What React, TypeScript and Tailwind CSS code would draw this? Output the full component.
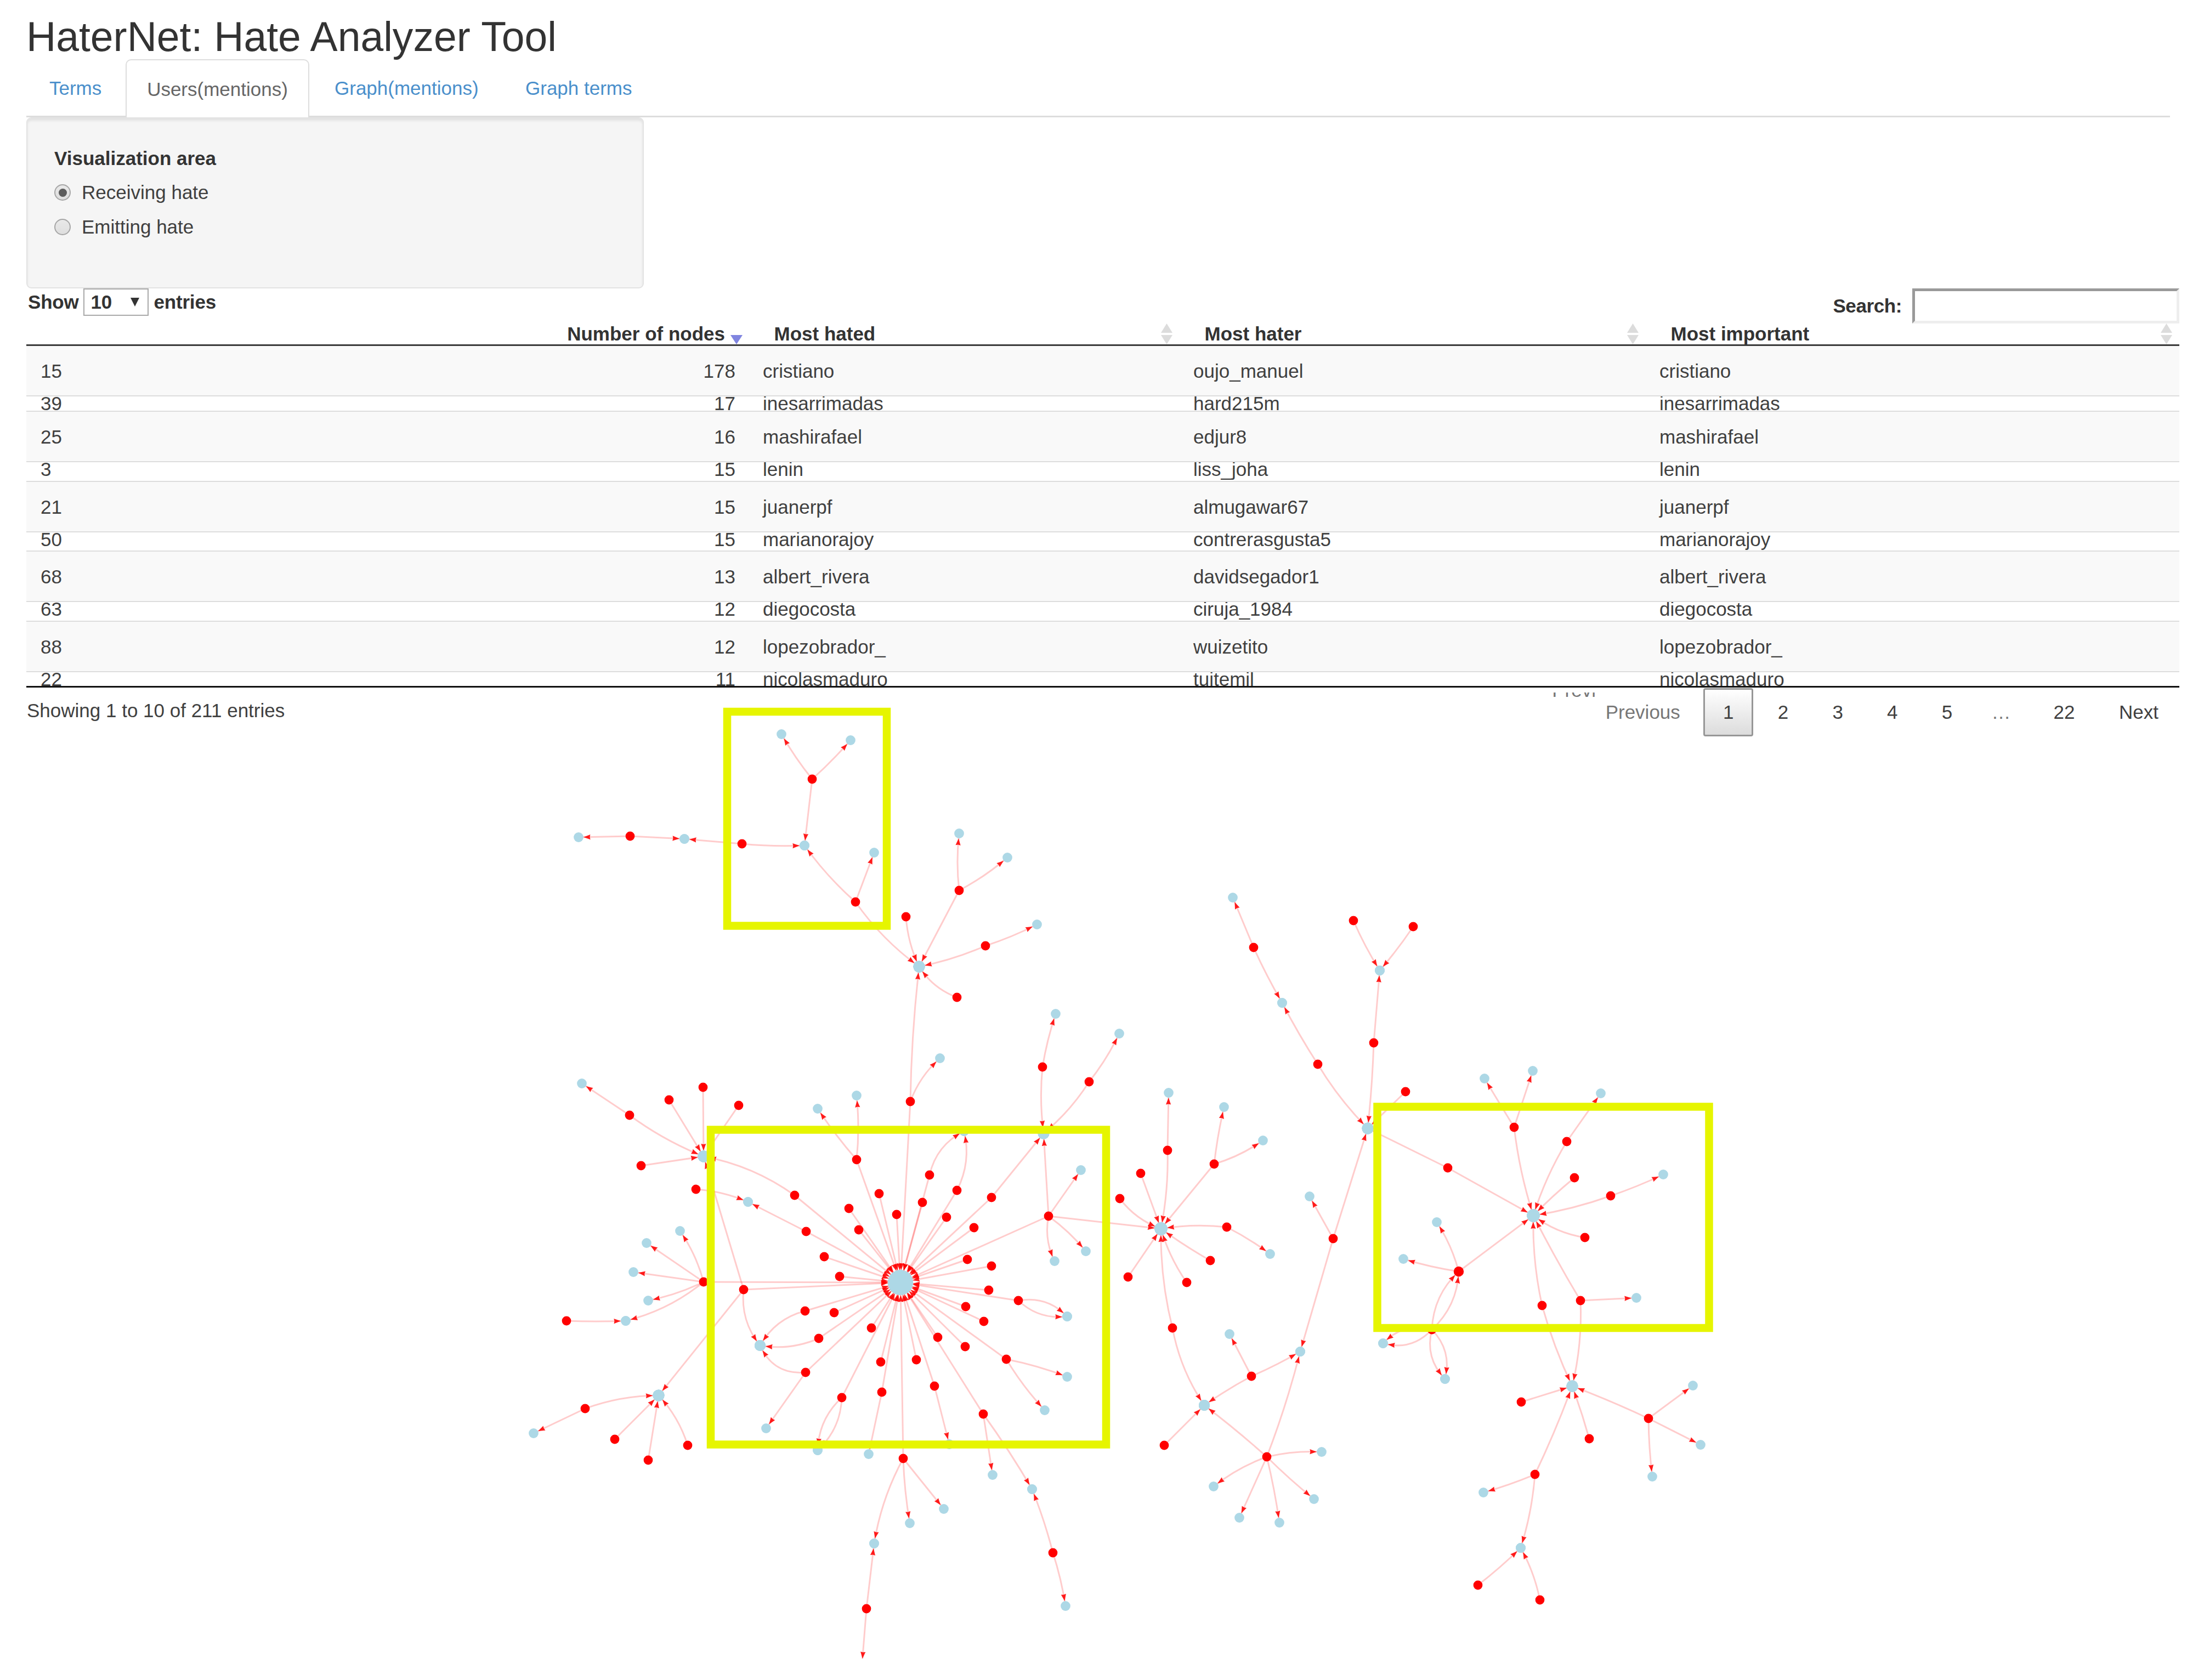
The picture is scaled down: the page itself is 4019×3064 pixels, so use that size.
import clsx from "clsx";

type Target = [x: number, y: number, bend?: number];
type Source = { at: [number, number]; to: Target[] };

const tabs = [
  { label: "Terms", width: "w-[181px]" },
  { label: "Users(mentions)", width: "w-[335px]", active: true },
  { label: "Graph(mentions)", width: "w-[348px]" },
  { label: "Graph terms", width: "w-[280px]" },
];

const rows = [
  { id: 15, nodes: 178, hated: "cristiano", hater: "oujo_manuel", height: "h-[90px]" },
  { id: 39, nodes: 17, hated: "inesarrimadas", hater: "hard215m", height: "h-[28px]" },
  { id: 25, nodes: 16, hated: "mashirafael", hater: "edjur8", height: "h-[92px]" },
  { id: 3, nodes: 15, hated: "lenin", hater: "liss_joha", height: "h-[36px]" },
  { id: 21, nodes: 15, hated: "juanerpf", hater: "almugawar67", height: "h-[92px]" },
  { id: 50, nodes: 15, hated: "marianorajoy", hater: "contrerasgusta5", height: "h-[35px]" },
  { id: 68, nodes: 13, hated: "albert_rivera", hater: "davidsegador1", height: "h-[92px]" },
  { id: 63, nodes: 12, hated: "diegocosta", hater: "ciruja_1984", height: "h-[36px]" },
  { id: 88, nodes: 12, hated: "lopezobrador_", hater: "wuizetito", height: "h-[92px]" },
  { id: 22, nodes: 11, hated: "nicolasmaduro", hater: "tuitemil", height: "h-[27px]" },
];

// Users that receive hate from several accounts
const CENTER: Target = [1642, 2339];
const T: Target = [1467, 1542];
const S: Target = [1676, 1763];
const M: Target = [1903, 2067];
const W: Target = [1283, 2109];
const D: Target = [1386, 2454];
const Q: Target = [1201, 2545];
const K: Target = [2117, 2241];
const Y: Target = [2196, 2563];
const Z: Target = [2371, 2465];
const O: Target = [2494, 2058];
const N: Target = [2516, 1770];
const G: Target = [2796, 2217];
const J: Target = [2867, 2528];
const X: Target = [2773, 2823];
const U: Target = [1594, 2815];
const V: Target = [1882, 2716];
const F: Target = [2660, 2319];

const radii = new Map<string, number>([
  ["1642,2339", 22.5],
  ["1676,1763", 10.5],
  ["1903,2067", 10.5],
  ["1283,2109", 10.5],
  ["1386,2454", 10],
  ["1201,2545", 10.5],
  ["2117,2241", 11.5],
  ["2196,2563", 10],
  ["2494,2058", 10.5],
  ["2796,2217", 11.5],
  ["2867,2528", 10.5],
]);

const bend = (t: Target, amount: number): Target => [t[0], t[1], amount];

const sources: Source[] = [
  { at: [1481, 1421], to: [[1425, 1339, -4], [1551, 1350, 3], T] },
  { at: [1149, 1525], to: [[1055, 1527], [1248, 1530]] },
  { at: [1353, 1539], to: [[1248, 1530], bend(T, 4)] },
  { at: [1560, 1645], to: [bend(T, -8), [1594, 1555], bend(S, 14)] },
  { at: [1652, 1672], to: [bend(S, 9)] },
  { at: [1749, 1624], to: [[1749, 1520, -6], [1837, 1564, 6], S] },
  { at: [1797, 1725], to: [[1891, 1686, 4], bend(S, -7)] },
  { at: [1745, 1819], to: [bend(S, -15)] },
  { at: [1660, 2009], to: [bend(S, -6), [1714, 1930, -12], CENTER] },
  { at: [1901, 1946], to: [[1925, 1849, -4], bend(M, 7)] },
  { at: [1986, 1973], to: [[2041, 1885, 6], bend(M, -10)] },
  { at: [1808, 2184], to: [M, CENTER] },
  { at: [1912, 2218], to: [M, [1971, 2134], [1980, 2282, -6], [1923, 2300, 14], CENTER, K] },
  { at: [1695, 2143], to: [[1758, 2063, -24], CENTER] },
  { at: [1745, 2171], to: [[1758, 2063, 20], CENTER] },
  { at: [1562, 2115], to: [[1491, 2022, -4], [1562, 1998, 6], CENTER] },
  { at: [1449, 2180], to: [bend(W, 20), CENTER] },
  { at: [1470, 2246], to: [[1364, 2192], CENTER] },
  { at: [1269, 2169], to: [[1364, 2192, -8]] },
  { at: [1548, 2204], to: [CENTER] },
  { at: [1603, 2177], to: [CENTER] },
  { at: [1566, 2243], to: [CENTER] },
  { at: [1635, 2215], to: [CENTER] },
  { at: [1682, 2193], to: [CENTER] },
  { at: [1726, 2220], to: [CENTER] },
  { at: [1776, 2239], to: [CENTER] },
  { at: [1503, 2292], to: [CENTER] },
  { at: [1531, 2328], to: [CENTER] },
  { at: [1764, 2297], to: [CENTER] },
  { at: [1808, 2309], to: [CENTER] },
  { at: [1803, 2353], to: [CENTER] },
  { at: [1761, 2383], to: [CENTER] },
  { at: [1794, 2410], to: [CENTER] },
  { at: [1710, 2439], to: [CENTER] },
  { at: [1760, 2456], to: [CENTER] },
  { at: [1671, 2480], to: [CENTER] },
  { at: [1589, 2422], to: [CENTER] },
  { at: [1521, 2394], to: [CENTER] },
  { at: [1606, 2484], to: [CENTER] },
  { at: [1857, 2372], to: [[1946, 2401, -25], [1946, 2401, 22], CENTER] },
  { at: [1835, 2479], to: [[1946, 2511, -5], [1905, 2572, 6], CENTER] },
  { at: [1793, 2579], to: [[1810, 2690], bend(V, -4), CENTER] },
  { at: [1704, 2528], to: [[1731, 2634], CENTER] },
  { at: [1468, 2391], to: [bend(D, 22), CENTER] },
  { at: [1493, 2441], to: [bend(D, -16), CENTER] },
  { at: [1469, 2503], to: [bend(D, -34), [1397, 2605], CENTER] },
  { at: [1356, 2352], to: [bend(D, 22), W, Q, CENTER] },
  { at: [1283, 2338], to: [[1240, 2245, 9], [1179, 2267], [1155, 2320], [1182, 2372, -7], [1141, 2409, -18], CENTER] },
  { at: [1033, 2409], to: [[1141, 2409, 2]] },
  { at: [1148, 2034], to: [[1061, 1976], bend(W, 10)] },
  { at: [1220, 2006], to: [W] },
  { at: [1282, 1983], to: [W] },
  { at: [1347, 2016], to: [W] },
  { at: [1169, 2126], to: [W] },
  { at: [1067, 2569], to: [[973, 2614], bend(Q, -12)] },
  { at: [1121, 2625], to: [Q] },
  { at: [1182, 2663], to: [Q] },
  { at: [1254, 2636], to: [bend(Q, 12)] },
  { at: [1535, 2549], to: [[1491, 2645, 22], [1491, 2645, -22], CENTER] },
  { at: [1608, 2539], to: [[1584, 2652], CENTER] },
  { at: [1647, 2660], to: [[1659, 2778, 4], [1721, 2752], bend(U, 14), CENTER] },
  { at: [1580, 2934], to: [U, [1572, 3034]] },
  { at: [1920, 2832], to: [bend(V, 4), [1943, 2929, -4]] },
  { at: [2042, 2186], to: [bend(K, 14)] },
  { at: [2080, 2140], to: [K] },
  { at: [2129, 2098], to: [bend(K, -8), [2131, 1993]] },
  { at: [2214, 2123], to: [[2232, 2019, -3], [2303, 2080, 8], K] },
  { at: [2237, 2238], to: [[2316, 2287, -4], bend(K, 8)] },
  { at: [2207, 2299], to: [bend(K, -3)] },
  { at: [2164, 2339], to: [bend(K, -9)] },
  { at: [2057, 2329], to: [K] },
  { at: [2138, 2422], to: [bend(K, -12), bend(Y, 16)] },
  { at: [2282, 2510], to: [[2242, 2433], bend(Z, 3), bend(Y, 3)] },
  { at: [2123, 2636], to: [Y] },
  {
    at: [2310, 2657],
    to: [bend(Y, 3), bend(Z, 6), [2410, 2648, -7], [2396, 2734, 3], [2333, 2777, -3], [2260, 2768], [2213, 2711, 9]],
  },
  { at: [2431, 2259], to: [[2388, 2182], Z, O] },
  { at: [2403, 1941], to: [[2338, 1829, -3], bend(O, 9)] },
  { at: [2286, 1728], to: [[2248, 1637], [2338, 1829, 3]] },
  { at: [2468, 1679], to: [bend(N, 4)] },
  { at: [2577, 1690], to: [bend(N, -3)] },
  { at: [2505, 1902], to: [N, bend(O, -3)] },
  { at: [2563, 1991], to: [O] },
  { at: [2640, 2130], to: [O, G] },
  { at: [2761, 2056], to: [[2707, 1967], [2795, 1953], bend(G, 8)] },
  { at: [2857, 2082], to: [[2919, 1994], bend(G, 9)] },
  { at: [2871, 2148], to: [bend(G, 3)] },
  { at: [2937, 2181], to: [[3033, 2142, 3], bend(G, -7)] },
  { at: [2890, 2257], to: [bend(G, -13)] },
  { at: [2660, 2319], to: [[2620, 2229, 8], [2559, 2296, -4], G] },
  { at: [2812, 2381], to: [bend(G, -10), bend(J, 7)] },
  { at: [2882, 2372], to: [bend(G, -3), [2984, 2367], bend(J, -11)] },
  {
    at: [2611, 2425],
    to: [[2522, 2450, 28], [2522, 2450, -28], [2635, 2515, 26], [2635, 2515, -26], bend(F, -24), bend(F, 24)],
  },
  { at: [2774, 2557], to: [J] },
  { at: [3006, 2587], to: [bend(J, 3), [3087, 2527], [3101, 2635], [3013, 2693, 3]] },
  { at: [2898, 2624], to: [bend(J, 2)] },
  { at: [2799, 2689], to: [bend(J, 4), [2705, 2722, -3], bend(X, -8)] },
  { at: [2695, 2891], to: [bend(X, 3)] },
  { at: [2808, 2918], to: [bend(X, 8)] },
];

function Edge({ from, to }: { from: [number, number]; to: Target }) {
  const [x1, y1] = from;
  const [x2, y2, amount = 0] = to;
  const length = Math.hypot(x2 - x1, y2 - y1);
  const cx = (x1 + x2) / 2 - ((y2 - y1) / length) * amount;
  const cy = (y1 + y2) / 2 + ((x2 - x1) / length) * amount;

  // Walk back along the curve until the tip touches the node's border
  const radius = radii.get(`${x2},${y2}`) ?? 9;
  let t = 1;
  let tipX = x2;
  let tipY = y2;
  while (t > 0.4 && Math.hypot(tipX - x2, tipY - y2) < radius) {
    t -= 0.002;
    tipX = (1 - t) ** 2 * x1 + 2 * t * (1 - t) * cx + t * t * x2;
    tipY = (1 - t) ** 2 * y1 + 2 * t * (1 - t) * cy + t * t * y2;
  }
  const back = Math.max(t - 14 / length, 0);
  const backX = (1 - back) ** 2 * x1 + 2 * back * (1 - back) * cx + back * back * x2;
  const backY = (1 - back) ** 2 * y1 + 2 * back * (1 - back) * cy + back * back * y2;
  const angle = (Math.atan2(tipY - backY, tipX - backX) * 180) / Math.PI;

  return (
    <g>
      <path d={`M${x1} ${y1}Q${cx} ${cy} ${x2} ${y2}`} fill="none" stroke="#ff0000" strokeOpacity="0.2" strokeWidth="3" />
      <path
        d="M0 0L-12.5 4.6L-11.5 0L-12.5 -4.6Z"
        fill="#ff0000"
        fillOpacity="0.88"
        transform={`translate(${tipX} ${tipY}) rotate(${angle})`}
      />
    </g>
  );
}

function HateGraph() {
  return (
    <svg className="-mt-[63px] block h-[1745px] w-[4019px]" viewBox="0 1280 4019 1745">
      {sources.map(({ at, to }) => to.map((target, i) => <Edge key={`${at}-${i}`} from={at} to={target} />))}
      {sources.map(({ to }) =>
        to
          .filter((target) => !(target[0] === F[0] && target[1] === F[1]))
          .map(([x, y], i) => (
            <circle key={`${x}-${y}-${i}`} cx={x} cy={y} r={radii.get(`${x},${y}`) ?? 8.9} fill="#add8e6" />
          ))
      )}
      {sources.map(({ at: [x, y] }) => (
        <circle key={`${x}-${y}`} cx={x} cy={y} r={x === F[0] && y === F[1] ? 9.2 : 8.4} fill="#ff0000" />
      ))}
      <g fill="none" stroke="#e6f500" strokeWidth="14.5">
        <rect x="1326" y="1298" width="291" height="390.5" />
        <rect x="1296" y="2060.5" width="721" height="574" />
        <rect x="2511.5" y="2018.5" width="605" height="403.5" />
      </g>
    </svg>
  );
}

function SortIcon() {
  return (
    <svg className="h-[38px] w-[21px]" viewBox="0 0 21 38" fill="#dcdcdc">
      <path d="M10.5 0L21 17H0ZM10.5 38L21 21H0Z" />
    </svg>
  );
}

function Radio({ label, checked }: { label: string; checked?: boolean }) {
  return (
    <div className="flex h-[62.5px] items-center">
      <span className="flex size-[30px] items-center justify-center rounded-full border-2 border-[#a6a6a6] bg-linear-to-b from-[#e9e9e9] to-[#dedede]">
        {checked && <span className="size-[15px] rounded-full bg-[#5c5c5c]" />}
      </span>
      <span className="ml-[20px]">{label}</span>
    </div>
  );
}

function Pagination() {
  return (
    <div className="mr-[2px] flex h-[88px] items-stretch leading-[38px] text-[#404040]">
      <span className="flex w-[216px] items-center justify-center pr-[5px] text-[#777]">Previous</span>
      <span className="flex w-[91px] items-center justify-center rounded-[4px] border-[3px] border-[#979797] bg-linear-to-b from-white to-[#dcdcdc]">
        1
      </span>
      {[2, 3, 4, 5].map((page) => (
        <span key={page} className="ml-[8.7px] flex w-[91px] items-center justify-center">
          {page}
        </span>
      ))}
      <span className="flex w-[106px] items-center justify-center text-[#777]">…</span>
      <span className="ml-[7px] flex w-[110px] items-center justify-center">22</span>
      <span className="ml-[9px] flex w-[144px] items-center justify-center">Next</span>
    </div>
  );
}

export default function App() {
  return (
    <div className="h-[3064px] w-[4019px] overflow-hidden bg-white font-['Liberation_Sans',Arial,sans-serif] text-[35px] leading-[40px] text-[#404040]">
      <h1 className="h-[108px] pt-[25px] pl-[48px] text-[75.1px] leading-[84px] whitespace-nowrap text-[#333]">
        HaterNet: Hate Analyzer Tool
      </h1>

      <nav className="ml-[48px] flex h-[106px] w-[3909px] border-b-[3px] border-[#ddd]">
        {tabs.map((tab) => (
          <a
            key={tab.label}
            className={clsx(
              "flex shrink-0 pt-[33px]",
              tab.width,
              tab.active
                ? "z-10 h-[106px] justify-center rounded-t-[10px] border-[2.5px] border-b-0 border-[#ddd] bg-white pt-[30px] text-[#666]"
                : "text-[#4a8fcb]",
              !tab.active && (tab.label === "Terms" ? "pl-[42px]" : "pl-[46px]")
            )}
          >
            {tab.label}
          </a>
        ))}
      </nav>

      <section className="ml-[48px] h-[312px] w-[1126px] rounded-[9px] border-[2.5px] border-[#e3e3e3] bg-[#f5f5f5] pt-[53px] pl-[49px] shadow-[inset_0_4px_4px_rgba(0,0,0,0.08)]">
        <p className="mb-[11px] font-bold text-[#333]">Visualization area</p>
        <Radio label="Receiving hate" checked />
        <Radio label="Emitting hate" />
      </section>

      <div className="mr-[45px] ml-[51px] flex h-[64px] items-start justify-between font-bold text-[#333]">
        <div className="flex items-center tracking-[-0.2px]">
          Show
          <span className="mr-[10px] ml-[8px] flex h-[50px] w-[119px] items-center justify-between border-2 border-[#a9a9a9] bg-white pr-[15px] pl-[12px]">
            10
            <svg className="h-[16px] w-[16px]" viewBox="0 0 16 16" fill="#333">
              <path d="M0 0H16L8 16Z" />
            </svg>
          </span>
          entries
        </div>
        <div className="flex items-center tracking-[-0.4px]">
          Search:
          <span className="ml-[19px] h-[64px] w-[487px] border-[5px] border-t-[#999] border-r-[#eee] border-b-[#eee] border-l-[#999] bg-white" />
        </div>
      </div>

      <div className="mr-[45px] ml-[48px]">
        <div className="grid h-[41px] grid-cols-[1324px_785px_850px_967px] border-b-[3px] border-[#3a3a3a] font-bold text-[#333]">
          <div className="flex justify-end pr-[18px]">
            <span className="-mt-px">Number of nodes</span>
            <svg className="mt-[21px] ml-[10px] h-[17px] w-[22px]" viewBox="0 0 22 17" fill="#8085e0">
              <path d="M0 0H22L11 17Z" />
            </svg>
          </div>
          <div className="flex justify-between pr-[19px] pl-[39.5px]">
            <span className="-mt-px">Most hated</span>
            <SortIcon />
          </div>
          <div className="flex justify-between pr-[19px] pl-[39.5px]">
            <span className="-mt-px">Most hater</span>
            <SortIcon />
          </div>
          <div className="flex justify-between pr-[13px] pl-[39.5px]">
            <span className="-mt-px">Most important</span>
            <SortIcon />
          </div>
        </div>

        {rows.map((row, i) => (
          <div
            key={row.id}
            className={clsx(
              "grid grid-cols-[400px_893px_50px_785px_850px_948px] overflow-hidden border-[#ddd]",
              row.height,
              i > 0 && "border-t-2",
              i % 2 === 0 ? "bg-[#f9f9f9]" : "bg-white"
            )}
          >
            <span className={clsx("pl-[26px]", i % 2 === 0 ? "pt-[25.5px]" : "-mt-[7px]")}>{row.id}</span>
            <span className={clsx("text-right", i % 2 === 0 ? "pt-[25.5px]" : "-mt-[7px]")}>{row.nodes}</span>
            <span />
            <span className={clsx(i % 2 === 0 ? "pt-[25.5px]" : "-mt-[7px]")}>{row.hated}</span>
            <span className={clsx(i % 2 === 0 ? "pt-[25.5px]" : "-mt-[7px]")}>{row.hater}</span>
            <span className={clsx(i % 2 === 0 ? "pt-[25.5px]" : "-mt-[7px]")}>{row.hated}</span>
          </div>
        ))}
        <div className="h-[4px] border-t-[3px] border-[#111]" />
      </div>

      <div className="mr-[45px] ml-[49px] flex h-[88px] justify-between">
        <span className="pt-[21px]">Showing 1 to 10 of 211 entries</span>
        <div className="flex">
          <span className="mt-[8px] flex h-[8px] w-[60px] items-end">
            <span className="flex h-[8px] w-[78px] shrink-0 items-end overflow-hidden text-[#777]">
              <span className="-mb-[8px]">Previ</span>
            </span>
          </span>
          <Pagination />
        </div>
      </div>

      <HateGraph />
    </div>
  );
}
